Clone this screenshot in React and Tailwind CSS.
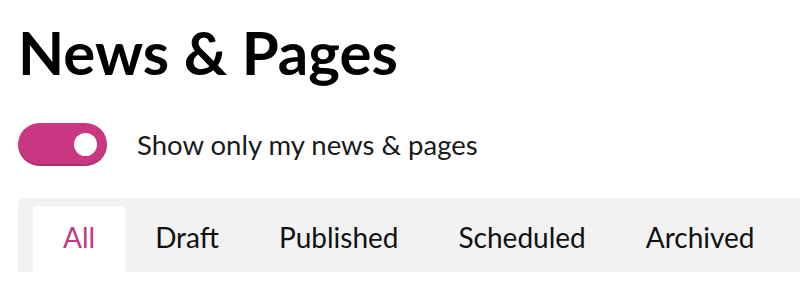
import React from "react";
import { useState } from "react";

const tabs = ["All", "Draft", "Published", "Scheduled", "Archived"];

export default function App() {
    const [onlyMine, setOnlyMine] = useState(true);
    const [activeTab, setActiveTab] = useState("All");

    return (
        <div className="bg-white min-h-screen pl-[18px] pt-[22px] text-[#111]" style={{ fontFamily: "Lato, sans-serif" }}>
            <h1 className="text-[60px] font-bold leading-none text-black">News &amp; Pages</h1>

            {/* toggle */}
            <div className="flex items-center gap-[30px] mt-[41px]">
                <button
                    type="button"
                    onClick={() => setOnlyMine(!onlyMine)}
                    className={
                        "w-[89px] h-[43px] rounded-full flex items-center px-[10px] shadow-[inset_0_-2px_0_rgba(0,0,0,0.12)] " +
                        (onlyMine ? "bg-[#c8377f] justify-end" : "bg-gray-300 justify-start")
                    }
                >
                    <span className="w-[23px] h-[23px] rounded-full bg-white" />
                </button>
                <span className="text-[27.5px] leading-none text-[#1a1a1a]">Show only my news &amp; pages</span>
            </div>

            {/* tabs */}
            <div className="mt-[32px] bg-[#f2f2f2] rounded-tl-[6px] pt-[8px] pl-[15px] flex">
                {tabs.map((tab) => (
                    <button
                        key={tab}
                        type="button"
                        onClick={() => setActiveTab(tab)}
                        className={
                            "h-[66px] px-[30px] pb-[4px] flex items-center text-[28px] leading-none rounded-t-[4px] " +
                            (activeTab === tab ? "bg-white text-[#c8377f]" : "text-[#111]")
                        }
                    >
                        {tab}
                    </button>
                ))}
            </div>
        </div>
    );
}
